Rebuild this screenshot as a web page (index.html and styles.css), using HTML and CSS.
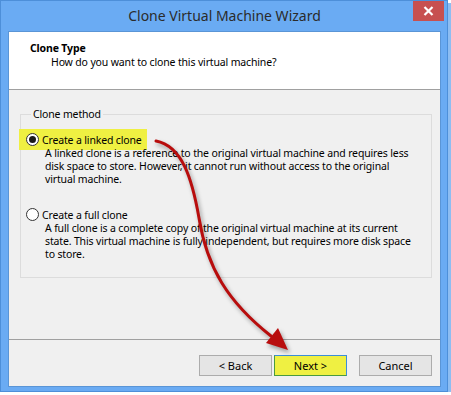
FILE: index.html
```html
<!DOCTYPE html>
<html lang="en">
<head>
  <meta charset="UTF-8">
  <title>Clone Virtual Machine Wizard</title>
  <link rel="stylesheet" href="styles.css">
</head>
<body>
  <div class="window">
    <div class="titlebar">
      <span></span>
      <span class="title">Clone Virtual Machine Wizard</span>
      <button class="close" aria-label="Close">
        <svg width="11" height="10" viewBox="0 0 11 10">
          <path d="M1.5 1 L9.5 9 M9.5 1 L1.5 9" stroke="#fff" stroke-width="2.2" fill="none"/>
        </svg>
      </button>
    </div>

    <div class="client">
      <div class="header">
        <div class="header-title">Clone Type</div>
        <div class="header-sub">How do you want to clone this virtual machine?</div>
      </div>

      <div class="body">
        <fieldset class="group">
          <legend>Clone method</legend>

          <div class="option">
            <label class="option-label marked">
              <span class="radio checked"></span>
              Create a linked clone
            </label>
            <p class="desc">A linked clone is a reference to the original virtual machine and requires less disk space to store. However, it cannot run without access to the original virtual machine.</p>
          </div>

          <div class="option">
            <label class="option-label">
              <span class="radio"></span>
              Create a full clone
            </label>
            <p class="desc">A full clone is a complete copy of the original virtual machine at its current state. This virtual machine is fully independent, but requires more disk space to store.</p>
          </div>
        </fieldset>
      </div>

      <div class="footer">
        <button class="btn">&lt; Back</button>
        <button class="btn next">Next &gt;</button>
        <button class="btn cancel">Cancel</button>
      </div>
    </div>

    <!-- annotation arrow drawn over the dialog -->
    <svg class="arrow" width="451" height="395" viewBox="0 0 451 395">
      <path d="M156 141 C 182 146, 192 178, 199 218 C 207 268, 228 302, 271 336" stroke="#b80d0d" stroke-width="3" fill="none" stroke-linecap="round"/>
      <polygon points="266,343 278,328 288,350" fill="#b80d0d"/>
    </svg>
  </div>
</body>
</html>
```

FILE: styles.css
```css
body {
  margin: 0;
  background: #fff;
  font-family: "Noto Sans", "Open Sans", sans-serif;
  font-size: 10.5px;
  letter-spacing: -0.15px;
  color: #000;
}

.window {
  position: relative;
  box-sizing: border-box;
  width: 448px;
  height: 392px;
  background: #6aabf3;
  border: 1px solid #4d8fd9;
  padding: 0 6px 4px 7px;
  box-shadow: 3px 3px 0 #8dbdf2;
  display: flex;
  flex-direction: column;
}

.titlebar {
  height: 30px;
  display: grid;
  grid-template-columns: 1fr auto 1fr;
  align-items: start;
}

.title {
  font-size: 14px;
  letter-spacing: 0;
  color: #2b2b2b;
  line-height: 30px;
}

.close {
  justify-self: end;
  margin-right: -3px;
  width: 31px;
  height: 20px;
  border: none;
  padding: 0;
  background: #c75050;
  display: flex;
  align-items: center;
  justify-content: center;
}

.client {
  flex: 1;
  display: flex;
  flex-direction: column;
  background: #f0f0f0;
  border: 1px solid #5a95d6;
}

.header {
  height: 58px;
  background: #fff;
  border-bottom: 1px solid #a0a0a0;
  padding: 9px 0 0 21px;
  box-sizing: border-box;
  line-height: 14px;
}

.header-title {
  font-weight: bold;
}

.header-sub {
  padding-left: 21px;
}

.body {
  flex: 1;
  padding: 17px 8px 0 11px;
  border-bottom: 1px solid #a0a0a0;
}

.group {
  margin: 0;
  height: 171px;
  box-sizing: border-box;
  border: 1px solid #dcdcdc;
  padding: 8px 10px 0 6px;
}

.group legend {
  padding: 0 2px;
  margin-left: 4px;
  line-height: 14px;
  color: #000;
}

.option + .option {
  margin-top: 18px;
}

.option-label {
  display: inline-flex;
  align-items: center;
  gap: 3px;
  height: 21px;
  padding: 0 5px 0 7px;
  margin-left: -8px;
}

.option-label.marked {
  background: #eff042;
}

.radio {
  box-sizing: border-box;
  width: 13px;
  height: 13px;
  border-radius: 50%;
  border: 1px solid #333;
  background: #fff;
  display: inline-flex;
  align-items: center;
  justify-content: center;
}

.radio.checked::after {
  content: "";
  width: 7px;
  height: 7px;
  border-radius: 50%;
  background: #1a1a1a;
}

.desc {
  margin: -3px 0 0 18px;
  line-height: 13px;
}

.footer {
  height: 46px;
  box-sizing: border-box;
  padding: 15px 8px 0 0;
  display: flex;
  justify-content: flex-end;
  gap: 2px;
}

.btn {
  width: 73px;
  height: 21px;
  font-family: inherit;
  font-size: 11px;
  background: #e5e5e5;
  border: 1px solid #acacac;
  padding: 0;
}

.next {
  background: #eff042;
  border-color: #3c8ed8;
  border-left-color: #4a9a40;
  border-bottom-color: #4a9a40;
}

.cancel {
  margin-left: 10px;
}

.arrow {
  position: absolute;
  left: -1px;
  top: -1px;
  pointer-events: none;
  filter: drop-shadow(2px 3px 2px rgba(0, 0, 0, 0.35));
}
```
